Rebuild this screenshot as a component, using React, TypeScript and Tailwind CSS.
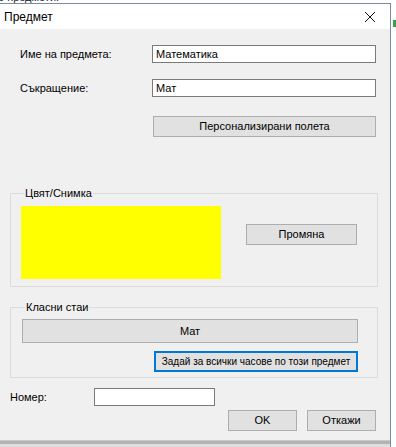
import React from "react";

const font = { fontFamily: '"Liberation Sans", Arial, sans-serif' };

function Btn({
  children,
  className = "",
  small = false,
}: {
  children: React.ReactNode;
  className?: string;
  small?: boolean;
}) {
  return (
    <button
      className={`flex items-center justify-center whitespace-nowrap border bg-[#e1e1e1] text-[#000] ${
        small ? "text-[10px]" : "text-[11px]"
      } ${className}`}
    >
      {children}
    </button>
  );
}

function Field({ value, className = "" }: { value?: string; className?: string }) {
  return (
    <div
      className={`flex h-[18px] items-center border border-[#7a7a7a] bg-white pl-[3px] text-[11px] leading-none text-black ${className}`}
    >
      {value}
    </div>
  );
}

export default function App() {
  return (
    <div
      className="relative h-[447px] w-[396px] overflow-hidden bg-white text-[11px] text-black"
      style={font}
    >
      {/* window behind the dialog */}
      <div className="h-[3px] overflow-hidden">
        <div className="-mt-[9px] -ml-[2px] text-[11px] leading-[12px] text-[#222]">
          е предмети:
        </div>
      </div>

      <div className="flex">
        <div className="flex w-[391px] flex-col border-t border-r border-[#7b8ba3]">
          {/* title bar */}
          <div className="flex h-[25px] items-center justify-between bg-white pl-[4px] pr-[14px]">
            <span className="text-[12px] leading-none">Предмет</span>
            <svg width="12" height="12" viewBox="0 0 12 12">
              <path d="M1 1 L11 11 M11 1 L1 11" stroke="#111" strokeWidth="1" />
            </svg>
          </div>

          {/* body */}
          <div className="flex h-[411px] flex-col bg-[#f0f0f0] px-[10px]">
            <div className="mt-[16px] flex items-center pl-[10px]">
              <span className="w-[132px]">Име на предмета:</span>
              <Field value="Математика" className="w-[224px]" />
            </div>
            <div className="mt-[16px] flex items-center pl-[10px]">
              <span className="w-[132px]">Съкращение:</span>
              <Field value="Мат" className="w-[224px]" />
            </div>
            <div className="mt-[19px] pl-[143px]">
              <Btn className="h-[21px] w-[223px] border-[#adadad]">Персонализирани полета</Btn>
            </div>

            <fieldset className="mt-[49px] w-[368px] border border-[#dcdcdc] px-[10px] pb-[7px]">
              <legend className="ml-[3px] px-[1px] leading-[14px]">Цвят/Снимка</legend>
              <div className="mt-[6px] flex items-start">
                <div className="h-[73px] w-[200px] bg-[#ffff00]" />
                <Btn className="mt-[18px] ml-[25px] h-[21px] w-[111px] border-[#adadad]">Промяна</Btn>
              </div>
            </fieldset>

            <fieldset className="mt-[13px] w-[368px] border border-[#dcdcdc] pl-[11px] pb-[5px]">
              <legend className="ml-[3px] px-[1px] leading-[14px]">Класни стаи</legend>
              <div className="mt-[5px] flex flex-col">
                <Btn className="h-[24px] w-[336px] border-[#adadad]">Мат</Btn>
                <Btn
                  small
                  className="mt-[8px] ml-[132px] h-[21px] w-[204px] border-[#0078d7] shadow-[inset_0_0_0_1px_#0078d7]"
                >
                  Задай за всички часове по този предмет
                </Btn>
              </div>
            </fieldset>

            <div className="mt-[10px] flex items-center">
              <span className="w-[84px]">Номер:</span>
              <Field className="w-[121px]" />
            </div>
            <div className="mt-[4px] flex justify-end gap-[10px] pr-[4px]">
              <Btn className="h-[21px] w-[69px] border-[#adadad]">OK</Btn>
              <Btn className="h-[21px] w-[69px] border-[#adadad]">Откажи</Btn>
            </div>
          </div>

          <div className="h-[1px] bg-[#c9c9c9]" />
          <div className="h-[3px] bg-[#b3b3b3]" />
          <div className="h-[3px] bg-[#dedede]" />
        </div>

        {/* edge of the desktop */}
        <div className="flex w-[5px] flex-col bg-white">
          <div className="mt-[17px] h-[7px] w-[3px] self-end bg-[#3aa14b]" />
        </div>
      </div>
    </div>
  );
}
